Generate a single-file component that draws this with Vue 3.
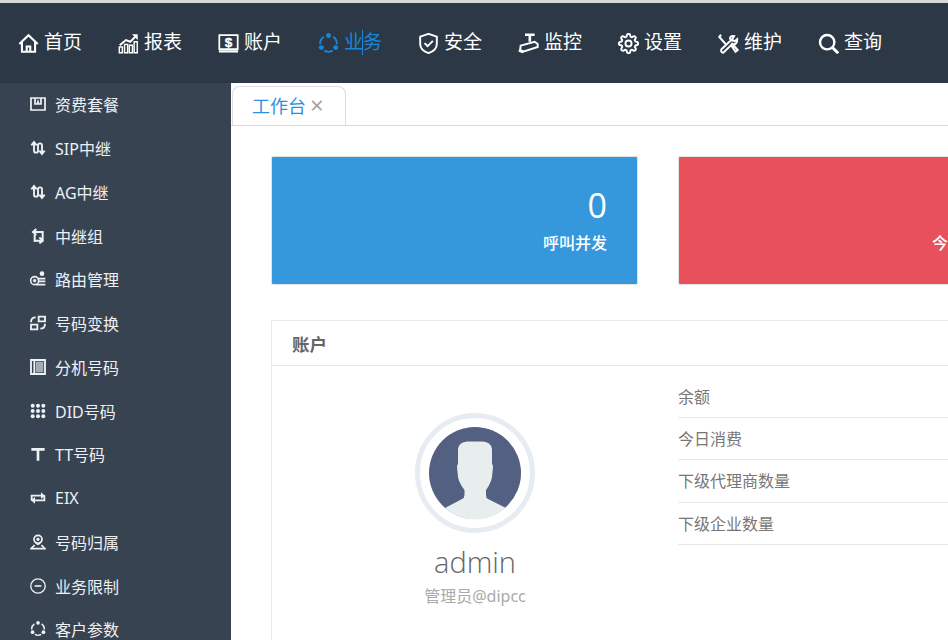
<template>
  <div class="page">
    <header class="topbar">
      <a
        v-for="item in navItems"
        :key="item.label"
        :class="['nav-item', { active: item.active }]"
      >
        <svg class="nav-icon" viewBox="0 0 24 24" v-html="icons[item.icon]"></svg>
        <span class="nav-label">{{ item.label }}</span>
      </a>
    </header>

    <div class="layout">
      <aside class="sidebar">
        <a v-for="item in sideItems" :key="item.label" class="side-item">
          <svg class="side-icon" viewBox="0 0 24 24" v-html="icons[item.icon]"></svg>
          <span>{{ item.label }}</span>
        </a>
      </aside>

      <main class="main">
        <div class="tabs">
          <div class="tab">
            <span class="tab-title">工作台</span>
            <span class="tab-close">×</span>
          </div>
        </div>

        <div class="content">
          <div class="stats">
            <div v-for="card in statCards" :key="card.label" :class="['stat', card.tone]">
              <div class="stat-value">{{ card.value }}</div>
              <div class="stat-label">{{ card.label }}</div>
            </div>
          </div>

          <section class="panel">
            <div class="panel-head">账户</div>
            <div class="panel-body">
              <div class="profile">
                <svg class="avatar" viewBox="0 0 120 120">
                  <circle cx="60" cy="60" r="57.5" fill="none" stroke="#e6ecf1" stroke-width="5" />
                  <circle cx="60" cy="60" r="46" fill="#546082" />
                  <path
                    d="M30 95L47 86Q49.500 85 49.500 82V77Q44 70 43 64L42 54Q42 52 43 51V36Q44 29 52 28.500H68Q76 29 77 36V51Q78 52 78 54L77 64Q76 70 71 77V82Q71 85 73 86L91 95A46 46 0 0 1 30 95Z"
                    fill="#e8eeee"
                  />
                </svg>
                <div class="name">admin</div>
                <div class="role">管理员@dipcc</div>
              </div>
              <ul class="rows">
                <li v-for="row in rows" :key="row">{{ row }}</li>
              </ul>
            </div>
          </section>
        </div>
      </main>
    </div>
  </div>
</template>

<script setup>
const dots = '<path d="M17.450 4.220A9.500 9.500 0 0 1 21.460 12.830M6.550 4.220A9.500 9.500 0 0 0 2.540 12.830M16.750 20.200A9.500 9.500 0 0 1 7.250 20.200" stroke-width="2.200"/><circle cx="12" cy="2.800" r="2.800" fill="currentColor" stroke="none"/><circle cx="3.800" cy="16.700" r="2.800" fill="currentColor" stroke="none"/><circle cx="20.200" cy="16.700" r="2.800" fill="currentColor" stroke="none"/>'

const swap = '<path d="M2 8l4-5 4 5M6 4v12a3 3 0 0 0 6 0V8a3 3 0 0 1 6 0v12M14 16l4 5 4-5" stroke-width="2.800"/>'

const icons = {
  home: '<path d="M1.500 12.500L12 2.500l10.500 10M4.500 10v11.500h15V10M10 21.500v-6h4v6" stroke-width="2.400"/>',
  chart: '<path d="M2 14l7-6 5 2 6-6" stroke-width="2.200"/><path d="M16 1.500h6.500V8z" fill="currentColor" stroke="none"/><path d="M1.500 16h3.500v6.500H1.500zM7.500 13h3.500v9.500H7.500zM13 14h3.500v8.500H13zM18.500 10H22v12.500h-3.500z" stroke-width="1.600"/>',
  money: '<path d="M1.500 2.500h21v16h-21z" stroke-width="2"/><path d="M1 21h22" stroke-width="2.600"/><text x="12" y="16.300" text-anchor="middle" font-family="Liberation Sans, sans-serif" font-weight="700" font-size="15.500" fill="currentColor" stroke="currentColor" stroke-width=".4">$</text>',
  dots,
  shield: '<path d="M12 1l9.500 3.200v8.300c0 5.200-4.200 8.700-9.500 10.500-5.300-1.800-9.500-5.300-9.500-10.500V4.200zM7.500 11.500l3.500 3.500 6-6" stroke-width="2.200"/>',
  camera: '<path d="M8 2h11M13.500 2v8" stroke-width="3"/><path d="M3 14.500L19 10l3.500 2.500v3.500L5 21.500l-2.500-2z" stroke-width="2.200"/><path d="M1 19.500l5 2" stroke-width="3.400"/>',
  gear: '<circle cx="12" cy="12" r="3.500" stroke-width="2.200"/><path stroke-width="2.200" d="M19.400 15a1.650 1.650 0 0 0 .33 1.820l.06.06a2 2 0 0 1 0 2.830 2 2 0 0 1-2.830 0l-.06-.06a1.650 1.650 0 0 0-1.820-.33 1.650 1.650 0 0 0-1 1.510V21a2 2 0 0 1-2 2 2 2 0 0 1-2-2v-.09A1.650 1.650 0 0 0 9 19.400a1.650 1.650 0 0 0-1.820.33l-.06.06a2 2 0 0 1-2.830 0 2 2 0 0 1 0-2.830l.06-.06a1.650 1.650 0 0 0 .33-1.820 1.650 1.650 0 0 0-1.510-1H3a2 2 0 0 1-2-2 2 2 0 0 1 2-2h.09A1.650 1.650 0 0 0 4.600 9a1.650 1.650 0 0 0-.33-1.820l-.06-.06a2 2 0 0 1 0-2.830 2 2 0 0 1 2.830 0l.06.06a1.650 1.650 0 0 0 1.820.33H9a1.650 1.650 0 0 0 1-1.510V3a2 2 0 0 1 2-2 2 2 0 0 1 2 2v.09a1.650 1.650 0 0 0 1 1.510 1.650 1.650 0 0 0 1.820-.33l.06-.06a2 2 0 0 1 2.830 0 2 2 0 0 1 0 2.830l-.06.06a1.650 1.650 0 0 0-.33 1.820V9a1.650 1.650 0 0 0 1.510 1H21a2 2 0 0 1 2 2 2 2 0 0 1-2 2h-.09a1.650 1.650 0 0 0-1.510 1z"/>',
  tools: '<path d="M3.500 2L1.500 4.500 9 13M14.500 13l5.500 8.500 2.500-2-7-8" stroke-width="2.400"/><path d="M14.500 8.500L4 18.500a2.500 2.500 0 0 0 2 4L16 13c3.500 1 6.500-1.500 6-6l-3 2.500-3-2 2.500-4c-3.500-1-6.500 2-3.500 5z" stroke-width="2.200"/>',
  search: '<circle cx="10.500" cy="10.500" r="8.200" stroke-width="2.800"/><path d="M16.500 16.500L23 23" stroke-width="3.400"/>',
  pack: '<path d="M1.500 3h21v18h-21zM7.500 3v9h3.300L12 8.500l1.200 3.500h3.300V3" stroke-width="2.600"/>',
  swap,
  relay: '<path d="M5 6h14v13H8M9.500 1.500L4.500 6l5 4.500M14 14l5 5-5 4M7 10v11" stroke-width="3"/>',
  route: '<circle cx="7" cy="14.500" r="6" stroke-width="2.400"/><circle cx="7" cy="14.500" r="2" fill="currentColor"/><circle cx="18" cy="4" r="3.500" fill="currentColor" stroke="none"/><path d="M11 11.500h12M13 15.500h10M9 20.500h14" stroke-width="2.600"/>',
  convert: '<path d="M13 9.500V2.500h9.500v7zM1.500 21.500v-7H11v7zM1.500 11c0-4.500 2.500-7.500 7-7.500M22.500 13c0 4.500-2.500 7.500-7 7.500" stroke-width="2.800"/>',
  phone: '<path d="M1.500 1.500h21v21h-21z" stroke-width="2.800"/><path d="M6.500 1.500v21" stroke-width="2.800"/><path d="M9 4h11v16H9z" fill="currentColor" opacity=".6" stroke="none"/>',
  grid: '<g fill="currentColor" stroke="none"><circle cx="4" cy="4" r="3"/><circle cx="12" cy="4" r="3"/><circle cx="20" cy="4" r="3"/><circle cx="4" cy="12" r="3"/><circle cx="12" cy="12" r="3"/><circle cx="20" cy="12" r="3"/><circle cx="4" cy="20" r="3"/><circle cx="12" cy="20" r="3"/><circle cx="20" cy="20" r="3"/></g>',
  text: '<path d="M2 5h20M12 5v17" stroke-width="4"/>',
  loop: '<path d="M2.500 16V8.500h16M21.500 8v7.500h-16" stroke-width="2.800"/><path d="M16.500 3.500l6 5-6 5zM7.500 10.500l-6 5 6 5z" fill="currentColor" stroke="none"/>',
  place: '<circle cx="12" cy="8" r="6" stroke-width="2.600"/><circle cx="12" cy="8" r="2" fill="currentColor"/><path d="M12 16l-3.500-3.500M12 16l3.500-3.500M7 16.500L1.500 22h21L17 16.500" stroke-width="2.600"/>',
  minus: '<circle cx="12" cy="12" r="10.800" stroke-width="2"/><path d="M7 12h10" stroke-width="2.400"/>'
}

const navItems = [
  { label: '首页', icon: 'home' },
  { label: '报表', icon: 'chart' },
  { label: '账户', icon: 'money' },
  { label: '业务', icon: 'dots', active: true },
  { label: '安全', icon: 'shield' },
  { label: '监控', icon: 'camera' },
  { label: '设置', icon: 'gear' },
  { label: '维护', icon: 'tools' },
  { label: '查询', icon: 'search' }
]

const sideItems = [
  { label: '资费套餐', icon: 'pack' },
  { label: 'SIP中继', icon: 'swap' },
  { label: 'AG中继', icon: 'swap' },
  { label: '中继组', icon: 'relay' },
  { label: '路由管理', icon: 'route' },
  { label: '号码变换', icon: 'convert' },
  { label: '分机号码', icon: 'phone' },
  { label: 'DID号码', icon: 'grid' },
  { label: 'TT号码', icon: 'text' },
  { label: 'EIX', icon: 'loop' },
  { label: '号码归属', icon: 'place' },
  { label: '业务限制', icon: 'minus' },
  { label: '客户参数', icon: 'dots' }
]

const statCards = [
  { label: '呼叫并发', value: 0, tone: 'blue' },
  { label: '今日呼叫量', value: 0, tone: 'red' }
]

const rows = ['余额', '今日消费', '下级代理商数量', '下级企业数量']
</script>

<style>
html,
body {
  margin: 0;
  background: #fff;
}
</style>

<style scoped>
.page {
  width: 948px;
  height: 640px;
  overflow: hidden;
  font-family: "Noto Sans", "Noto Sans CJK SC", sans-serif;
}

.topbar {
  display: flex;
  align-items: center;
  box-sizing: border-box;
  height: 83px;
  padding-left: 18px;
  border-top: 3px solid #d6d7d9;
  background: #2c3845;
  color: #fff;
}

.nav-item {
  display: flex;
  flex: 0 0 100px;
  align-items: center;
  gap: 5px;
  font-size: 19px;
}

.nav-item.active {
  color: #1a86d9;
}

.nav-item.active .nav-label {
  position: relative;
}

.nav-item.active .nav-label::after {
  content: "";
  position: absolute;
  top: 0;
  bottom: 0;
  left: 18px;
  width: 1px;
  background: #1a86d9;
}

.nav-icon {
  width: 21px;
  height: 21px;
  fill: none;
  stroke: currentColor;
}

.nav-label {
  margin-top: -2px;
  line-height: 25px;
}

.layout {
  display: flex;
  height: 557px;
}

.sidebar {
  flex: 0 0 231px;
  background: #384352;
  color: #eef1f4;
  font-size: 16px;
}

.side-item {
  display: flex;
  align-items: center;
  gap: 9px;
  box-sizing: border-box;
  height: 43.75px;
  padding: 0 0 1px 30px;
}

.side-icon {
  width: 16px;
  height: 16px;
  fill: none;
  stroke: currentColor;
}

.main {
  flex: 1;
  min-width: 0;
}

.tabs {
  display: flex;
  box-sizing: border-box;
  height: 43px;
  padding: 3px 0 0 1px;
  border-bottom: 1px solid #d9d9d9;
}

.tab {
  display: flex;
  align-items: center;
  box-sizing: border-box;
  width: 114px;
  height: 39px;
  padding: 0 0 2px 19px;
  border: 1px solid #dddddd;
  border-bottom: 0;
  border-radius: 8px 8px 0 0;
}

.tab-title {
  color: #2f8fdc;
  font-size: 18px;
}

.tab-close {
  margin-left: 4px;
  color: #a3a3a3;
  font-size: 24px;
  line-height: 1;
}

.content {
  padding: 30px 0 0 40px;
}

.stats {
  display: flex;
  gap: 40px;
}

.stat {
  flex: 0 0 367px;
  box-sizing: border-box;
  height: 129px;
  padding: 25px 30px 0 0;
  border: 1px solid #e3e3e3;
  border-radius: 2px;
  color: #fff;
  text-align: right;
}

.stat.blue {
  background: #3598dc;
}

.stat.red {
  padding-right: 32px;
  background: #e8505b;
}

.stat-value {
  font-family: "Open Sans", sans-serif;
  font-size: 34px;
  line-height: 46px;
}

.stat-label {
  margin-top: 3px;
  font-size: 16px;
  font-weight: 500;
  line-height: 24px;
}

.panel {
  box-sizing: border-box;
  width: 800px;
  height: 400px;
  margin-top: 35px;
  border: 1px solid #e9e9e9;
}

.panel-head {
  box-sizing: border-box;
  height: 45px;
  padding-left: 20px;
  border-bottom: 1px solid #e8e8e8;
  color: #666;
  font-size: 17.500px;
  font-weight: 700;
  line-height: 47px;
}

.panel-body {
  display: grid;
  grid-template-columns: 406px 1fr;
}

.profile {
  display: flex;
  flex-direction: column;
  align-items: center;
  padding-top: 47px;
}

.avatar {
  display: block;
  width: 120px;
  height: 120px;
}

.name {
  margin-top: 8px;
  color: #666;
  font-family: "Open Sans", sans-serif;
  font-size: 29px;
  font-weight: 300;
  line-height: 42px;
}

.role {
  margin-top: 1px;
  color: #aaa;
  font-size: 16px;
  line-height: 24px;
}

.rows {
  margin: 0;
  padding: 9.800px 0 0;
  list-style: none;
}

.rows li {
  box-sizing: border-box;
  height: 42.250px;
  border-bottom: 1px solid #e8e8e8;
  color: #777;
  font-size: 16px;
  line-height: 42px;
}
</style>
